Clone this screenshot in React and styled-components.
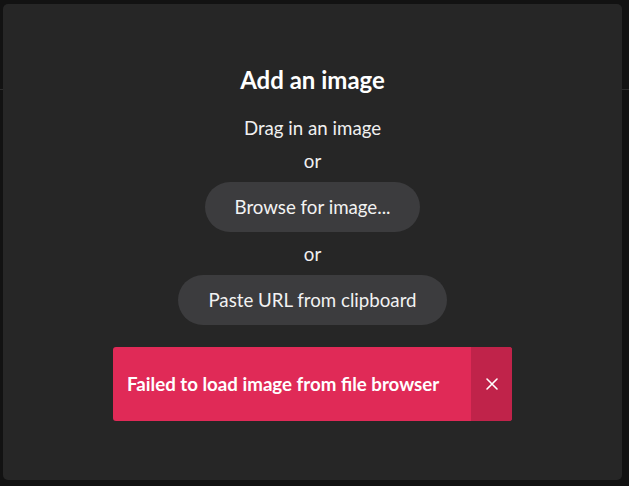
import React from "react";
import styled, { createGlobalStyle } from "styled-components";

const GlobalStyle = createGlobalStyle`
	html, body {
		margin: 0;
		padding: 0;
		background: #121212;
		font-family: Lato, "Noto Sans", sans-serif;
	}
`;

const Page = styled.div`
	width: 629px;
	height: 486px;
	position: relative;
	overflow: hidden;
	background: #121212;
`;

const Backdrop = styled.div`
	position: absolute;
	inset: 0;
	&::after {
		content: "";
		position: absolute;
		left: 0;
		right: 0;
		top: 89px;
		height: 1px;
		background: #2c2c2c;
	}
`;

const Modal = styled.div`
	position: absolute;
	left: 3px;
	top: 4px;
	width: 619px;
	height: 476px;
	box-sizing: border-box;
	border-radius: 5px;
	background: #262626;
	display: flex;
	flex-direction: column;
	align-items: center;
	padding-top: 62px;
	color: #f2f2f2;
`;

const Title = styled.h2`
	margin: 0 0 22px;
	font-size: 24px;
	line-height: 28px;
	font-weight: 700;
	color: #ffffff;
`;

const Options = styled.div`
	display: flex;
	flex-direction: column;
	align-items: center;
	gap: 9px;
`;

const Line = styled.div`
	font-size: 18.7px;
	line-height: 24px;
	color: #f0f0f0;
`;

const PillButton = styled.button`
	height: 50px;
	margin-bottom: 1px;
	padding: 0 30px;
	border: none;
	border-radius: 25px;
	background: #3c3c3e;
	color: #f2f2f2;
	font-family: inherit;
	font-size: 18.7px;
	cursor: pointer;
`;

const ErrorBanner = styled.div`
	margin-top: 21px;
	width: 399px;
	height: 74px;
	display: flex;
	border-radius: 3px;
	overflow: hidden;
	background: #e02a57;
	color: #ffffff;
`;

const ErrorText = styled.div`
	flex: 1;
	display: flex;
	align-items: center;
	padding-left: 14px;
	font-size: 18.7px;
	font-weight: 700;
`;

const CloseButton = styled.button`
	width: 41px;
	border: none;
	background: #c0234a;
	color: #ffffff;
	display: flex;
	align-items: center;
	justify-content: center;
	padding: 0;
	cursor: pointer;
`;

export default function App() {
	return (
		<Page>
			<GlobalStyle />
			<Backdrop />
			<Modal>
				<Title>Add an image</Title>
				<Options>
					<Line>Drag in an image</Line>
					<Line>or</Line>
					<PillButton>Browse for image...</PillButton>
					<Line>or</Line>
					<PillButton>Paste URL from clipboard</PillButton>
				</Options>
				<ErrorBanner>
					<ErrorText>Failed to load image from file browser</ErrorText>
					<CloseButton>
						<svg width="14" height="14" viewBox="0 0 14 14">
							<path
								d="M2 2 L12 12 M12 2 L2 12"
								stroke="#ffffff"
								strokeWidth="1.6"
								strokeLinecap="round"
							/>
						</svg>
					</CloseButton>
				</ErrorBanner>
			</Modal>
		</Page>
	);
}
